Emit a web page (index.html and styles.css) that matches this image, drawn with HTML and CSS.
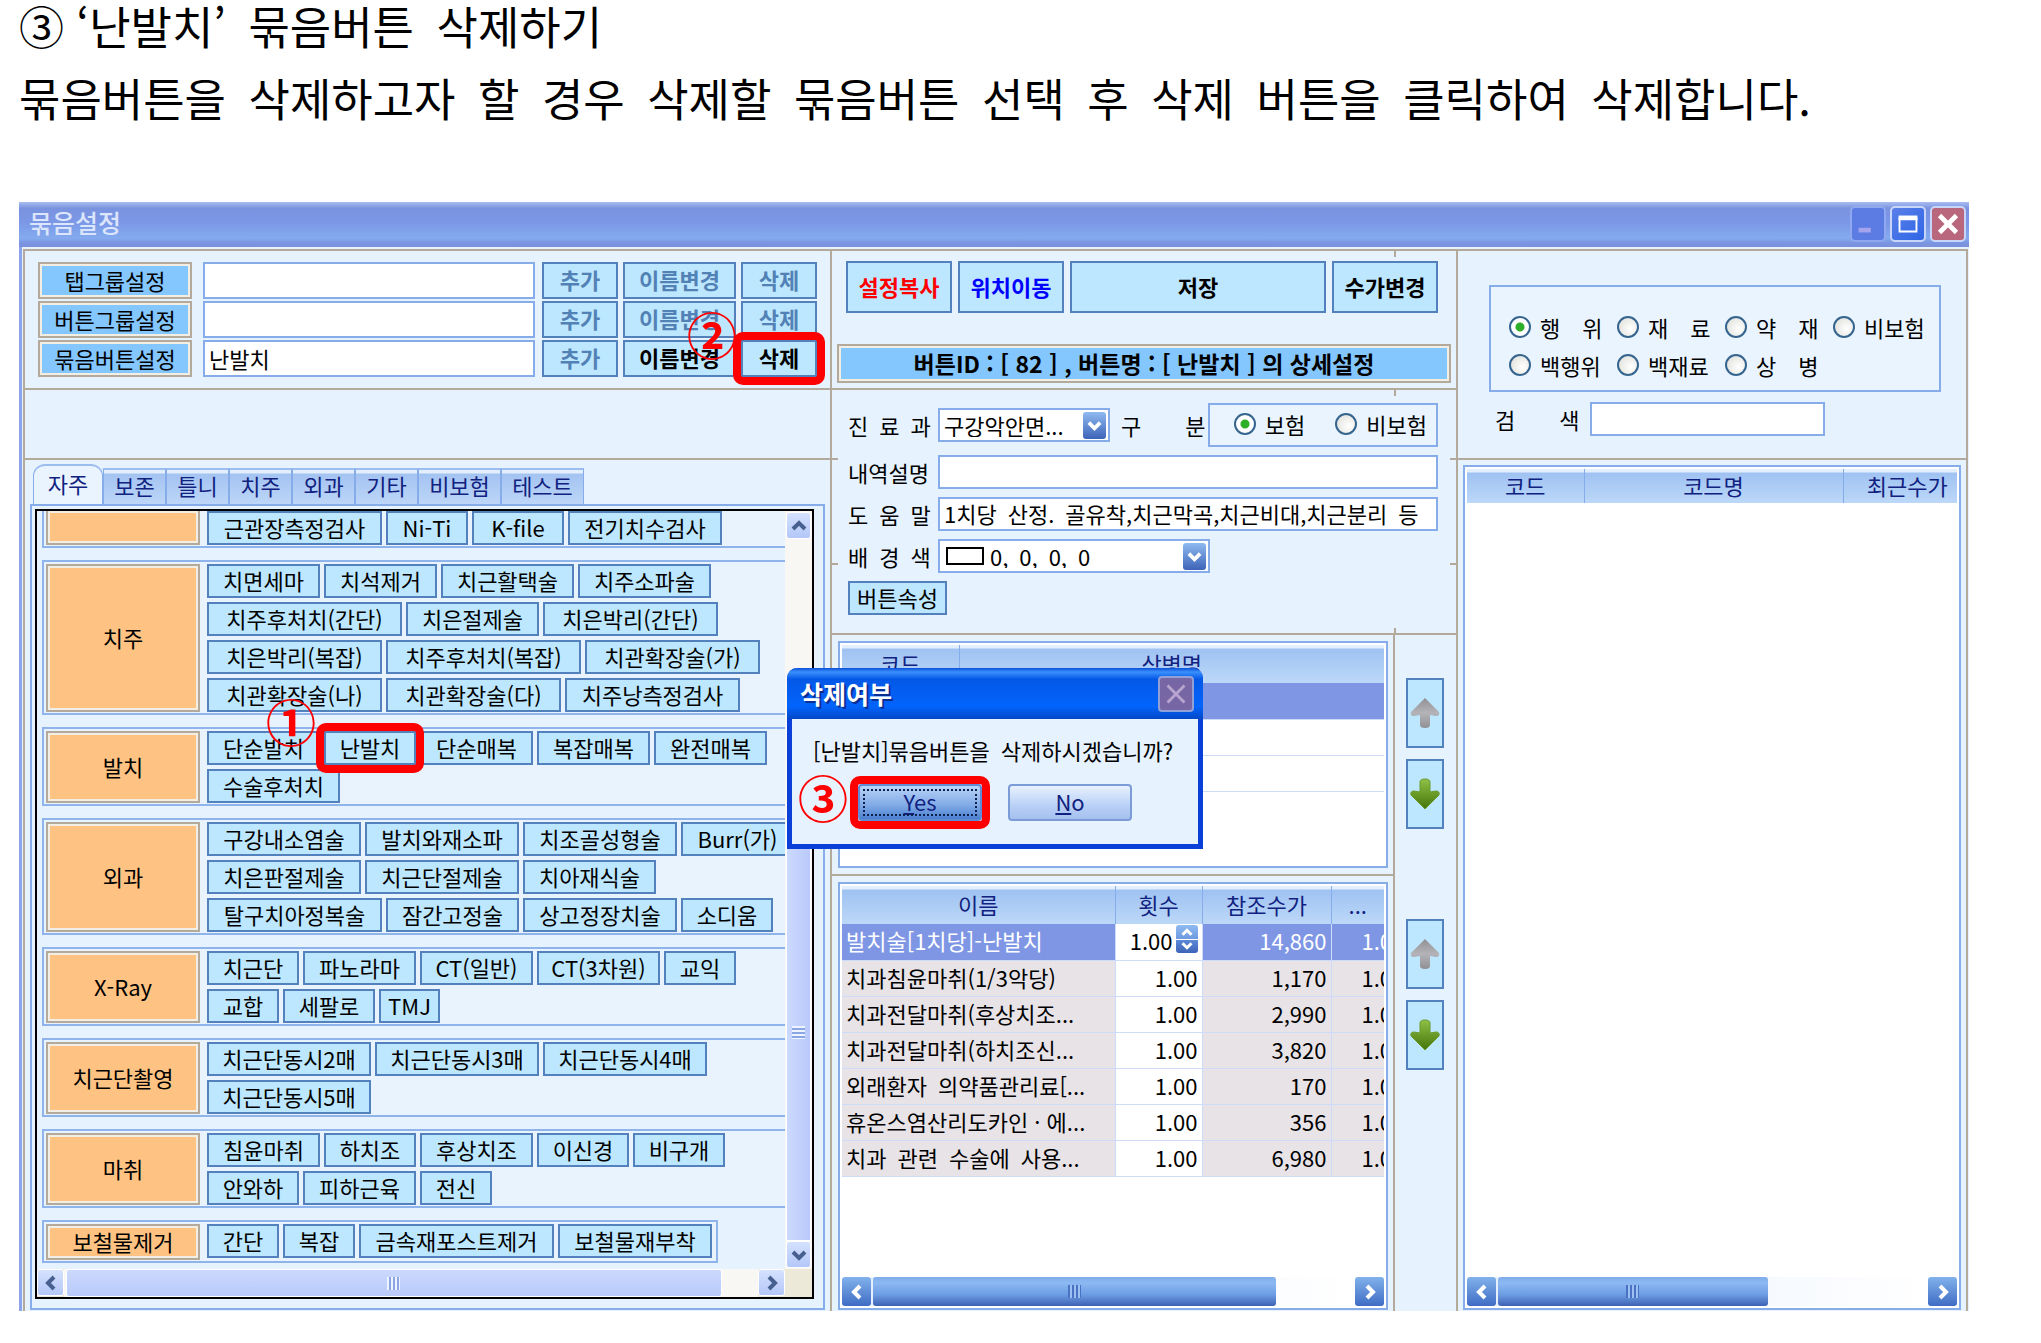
FILE: index.html
```html
<!DOCTYPE html>
<html lang="ko">
<head>
  <meta charset="UTF-8" />
  <meta name="viewport" content="width=device-width, initial-scale=1" />
  <title>묶음설정</title>
  <link rel="stylesheet" href="styles.css">
</head>
<body>
  <!-- shared icons -->
  <svg class="defs" width="0" height="0" aria-hidden="true">
    <defs>
      <linearGradient id="gGray" x1="0" y1="0" x2="0" y2="1"><stop offset="0" stop-color="#8f8f95"/><stop offset="0.5" stop-color="#b4b4b8"/><stop offset="1" stop-color="#909094"/></linearGradient>
      <linearGradient id="gGreen" x1="0" y1="0" x2="0" y2="1"><stop offset="0" stop-color="#8fc046"/><stop offset="1" stop-color="#44750a"/></linearGradient>
      <symbol id="arrowUp" viewBox="0 0 30 32"><path d="M15 1 L29 15 Q30 19 26 19 L20 18 V28 Q20 31 15 31 Q10 31 10 28 V18 L4 19 Q0 19 1 15 Z" fill="url(#gGray)"/></symbol>
      <symbol id="arrowDown" viewBox="0 0 30 32"><path d="M15 31 L29 17 Q30 13 26 13 L20 14 V4 Q20 1 15 1 Q10 1 10 4 V14 L4 13 Q0 13 1 17 Z" fill="url(#gGreen)" stroke="#6a9a2c"/></symbol>
      <symbol id="chevL" viewBox="0 0 16 16"><path d="M11 2 L5 8 L11 14" fill="none" stroke="currentColor" stroke-width="4"/></symbol>
      <symbol id="chevR" viewBox="0 0 16 16"><path d="M5 2 L11 8 L5 14" fill="none" stroke="currentColor" stroke-width="4"/></symbol>
      <symbol id="chevU" viewBox="0 0 16 16"><path d="M2 11 L8 5 L14 11" fill="none" stroke="currentColor" stroke-width="4"/></symbol>
      <symbol id="chevD" viewBox="0 0 16 16"><path d="M2 5 L8 11 L14 5" fill="none" stroke="currentColor" stroke-width="4"/></symbol>
    </defs>
  </svg>

  <h1>③ ‘난발치’&ensp;묶음버튼&ensp;삭제하기</h1>
  <p class="guide">묶음버튼을&ensp;삭제하고자&ensp;할&ensp;경우&ensp;삭제할&ensp;묶음버튼&ensp;선택&ensp;후&ensp;삭제&ensp;버튼을&ensp;클릭하여&ensp;삭제합니다.</p>

  <main class="window">
    <header class="titlebar">
      <h2>묶음설정</h2>
      <button class="winbtn min" aria-label="최소화"><svg viewBox="0 0 34 34"><rect x="7" y="21" width="13" height="5" fill="#a3a3ee"/></svg></button>
      <button class="winbtn max" aria-label="최대화"><svg viewBox="0 0 34 34"><path d="M8 11 H26 V25 H8 Z" fill="none" stroke="#fff" stroke-width="2"/><rect x="7" y="8" width="20" height="5" fill="#fff"/></svg></button>
      <button class="winbtn close" aria-label="닫기"><svg viewBox="0 0 34 34"><path d="M8 8 L26 26 M26 8 L8 26" stroke="#fff" stroke-width="5"/></svg></button>
    </header>

    <div class="columns">
      <!-- 묶음 목록 -->
      <section class="col col-left">
        <div class="top names">
          <div class="name-row">
            <label class="bevel" for="tabGroup">탭그룹설정</label>
            <input type="text" id="tabGroup">
            <button class="btn bold w76" disabled>추가</button>
            <button class="btn bold w113" disabled>이름변경</button>
            <button class="btn bold w76" disabled>삭제</button>
          </div>
          <div class="name-row">
            <label class="bevel" for="btnGroup">버튼그룹설정</label>
            <input type="text" id="btnGroup">
            <button class="btn bold w76" disabled>추가</button>
            <button class="btn bold w113" disabled>이름변경</button>
            <button class="btn bold w76" disabled>삭제</button>
          </div>
          <div class="name-row">
            <label class="bevel" for="setBtn">묶음버튼설정</label>
            <input type="text" id="setBtn" value="난발치">
            <button class="btn bold w76" disabled>추가</button>
            <button class="btn bold w113">이름변경</button>
            <button class="btn bold w76 marked">삭제<span class="step step-2">②</span></button>
          </div>
        </div>
        <div class="spacer"></div>

        <div class="tabs">
          <button class="tab active">자주</button><button class="tab">보존</button><button class="tab">틀니</button><button class="tab">치주</button><button class="tab">외과</button><button class="tab">기타</button><button class="tab tab-wide">비보험</button><button class="tab tab-wide">테스트</button>
        </div>
        <div class="tab-panel">
          <div class="scroller">
            <div class="groups">
              <div class="group cut">
                <div class="group-name"></div>
                <div class="rows">
                  <div class="row"><button class="btn w175">근관장측정검사</button><button class="btn w82">Ni-Ti</button><button class="btn w92">K-file</button><button class="btn w154">전기치수검사</button></div>
                </div>
              </div>
              <div class="group">
                <div class="group-name">치주</div>
                <div class="rows">
                  <div class="row"><button class="btn w113">치면세마</button><button class="btn w113">치석제거</button><button class="btn w133">치근활택술</button><button class="btn w133">치주소파술</button></div>
                  <div class="row"><button class="btn w195">치주후처치(간단)</button><button class="btn w133">치은절제술</button><button class="btn w175">치은박리(간단)</button></div>
                  <div class="row"><button class="btn w175">치은박리(복잡)</button><button class="btn w195">치주후처치(복잡)</button><button class="btn w175">치관확장술(가)</button></div>
                  <div class="row"><button class="btn w175">치관확장술(나)</button><button class="btn w175">치관확장술(다)</button><button class="btn w175">치주낭측정검사</button></div>
                </div>
              </div>
              <div class="group">
                <div class="group-name">발치</div>
                <div class="rows">
                  <div class="row"><button class="btn w113">단순발치</button><button class="btn w92 marked">난발치<span class="step step-1">①</span></button><button class="btn w113">단순매복</button><button class="btn w113">복잡매복</button><button class="btn w113">완전매복</button></div>
                  <div class="row"><button class="btn w133">수술후처치</button></div>
                </div>
              </div>
              <div class="group">
                <div class="group-name">외과</div>
                <div class="rows">
                  <div class="row"><button class="btn w154">구강내소염술</button><button class="btn w154">발치와재소파</button><button class="btn w154">치조골성형술</button><button class="btn w113">Burr(가)</button></div>
                  <div class="row"><button class="btn w154">치은판절제술</button><button class="btn w154">치근단절제술</button><button class="btn w133">치아재식술</button></div>
                  <div class="row"><button class="btn w175">탈구치아정복술</button><button class="btn w133">잠간고정술</button><button class="btn w154">상고정장치술</button><button class="btn w92">소디움</button></div>
                </div>
              </div>
              <div class="group">
                <div class="group-name">X-Ray</div>
                <div class="rows">
                  <div class="row"><button class="btn w92">치근단</button><button class="btn w113">파노라마</button><button class="btn w113">CT(일반)</button><button class="btn w123">CT(3차원)</button><button class="btn w72">교익</button></div>
                  <div class="row"><button class="btn w72">교합</button><button class="btn w92">세팔로</button><button class="btn w61">TMJ</button></div>
                </div>
              </div>
              <div class="group">
                <div class="group-name">치근단촬영</div>
                <div class="rows">
                  <div class="row"><button class="btn w164">치근단동시2매</button><button class="btn w164">치근단동시3매</button><button class="btn w164">치근단동시4매</button></div>
                  <div class="row"><button class="btn w164">치근단동시5매</button></div>
                </div>
              </div>
              <div class="group">
                <div class="group-name">마취</div>
                <div class="rows">
                  <div class="row"><button class="btn w113">침윤마취</button><button class="btn w92">하치조</button><button class="btn w113">후상치조</button><button class="btn w92">이신경</button><button class="btn w92">비구개</button></div>
                  <div class="row"><button class="btn w92">안와하</button><button class="btn w113">피하근육</button><button class="btn w72">전신</button></div>
                </div>
              </div>
              <div class="group fit">
                <div class="group-name">보철물제거</div>
                <div class="rows">
                  <div class="row"><button class="btn w72">간단</button><button class="btn w72">복잡</button><button class="btn w195">금속재포스트제거</button><button class="btn w154">보철물재부착</button></div>
                </div>
              </div>
            </div>
            <div class="vbar">
              <button class="sbtn" aria-label="위로"><svg><use href="#chevU"/></svg></button>
              <div class="vthumb"><i class="grip"></i></div>
              <button class="sbtn" aria-label="아래로"><svg><use href="#chevD"/></svg></button>
            </div>
            <div class="hbar">
              <button class="sbtn" aria-label="왼쪽"><svg><use href="#chevL"/></svg></button>
              <div class="track"><div class="thumb wide"><i class="grip"></i></div></div>
              <button class="sbtn" aria-label="오른쪽"><svg><use href="#chevR"/></svg></button>
            </div>
          </div>
        </div>
      </section>

      <!-- 상세설정 -->
      <section class="col col-mid">
        <div class="top detail-top">
          <div class="tools">
            <button class="btn bold red">설정복사</button>
            <button class="btn bold blue">위치이동</button>
            <button class="btn bold save">저장</button>
            <button class="btn bold">수가변경</button>
          </div>
          <div class="bevel detail-title">버튼ID : [ 82 ] , 버튼명 : [ 난발치 ] 의 상세설정</div>
        </div>

        <div class="form">
          <div class="form-row tall">
            <label for="dept">진&ensp;료&ensp;과</label>
            <div class="combo dept">
              <select id="dept"><option>구강악안면...</option></select>
              <span class="drop"><svg><use href="#chevD"/></svg></span>
            </div>
            <span class="kind">구&emsp;&emsp;분</span>
            <div class="radio-box kinds">
              <label><input type="radio" name="kind" checked>보험</label>
              <label><input type="radio" name="kind">비보험</label>
            </div>
          </div>
          <div class="form-row">
            <label for="desc">내역설명</label>
            <input type="text" id="desc">
          </div>
          <div class="form-row">
            <label for="help">도&ensp;움&ensp;말</label>
            <input type="text" id="help" value="1치당&ensp;산정.&ensp;골유착,치근막곡,치근비대,치근분리&ensp;등">
          </div>
          <div class="form-row">
            <label for="color">배&ensp;경&ensp;색</label>
            <div class="combo color">
              <i class="swatch"></i>
              <select id="color"><option>0,&ensp;0,&ensp;0,&ensp;0</option></select>
              <span class="drop"><svg><use href="#chevD"/></svg></span>
            </div>
          </div>
          <button class="btn prop">버튼속성</button>
        </div>

        <div class="lists">
          <div class="list-area first">
            <div class="grid-box">
              <table>
                <colgroup><col class="c117"><col></colgroup>
                <thead><tr><th scope="col">코드</th><th scope="col">상병명</th></tr></thead>
                <tbody>
                  <tr class="sel"><td></td><td></td></tr>
                  <tr><td></td><td></td></tr>
                  <tr><td></td><td></td></tr>
                </tbody>
              </table>
            </div>
          </div>
          <div class="arrows">
            <button class="btn" aria-label="위로 이동"><svg><use href="#arrowUp"/></svg></button>
            <button class="btn" aria-label="아래로 이동"><svg><use href="#arrowDown"/></svg></button>
          </div>
          <div class="list-area">
            <div class="grid-box">
              <table class="fees">
                <colgroup><col><col class="c87"><col class="c129"><col class="c53"></colgroup>
                <thead><tr><th scope="col">이름</th><th scope="col">횟수</th><th scope="col">참조수가</th><th scope="col">...</th></tr></thead>
                <tbody>
                  <tr class="sel"><td>발치술[1치당]-난발치</td><td class="cnt"><span class="spin">1.00<span class="updown"><svg><use href="#chevU"/></svg><svg><use href="#chevD"/></svg></span></span></td><td>14,860</td><td>1.00</td></tr>
                  <tr><td>치과침윤마취(1/3악당)</td><td class="cnt">1.00</td><td>1,170</td><td>1.00</td></tr>
                  <tr><td>치과전달마취(후상치조...</td><td class="cnt">1.00</td><td>2,990</td><td>1.00</td></tr>
                  <tr><td>치과전달마취(하치조신...</td><td class="cnt">1.00</td><td>3,820</td><td>1.00</td></tr>
                  <tr><td>외래환자&ensp;의약품관리료[...</td><td class="cnt">1.00</td><td>170</td><td>1.00</td></tr>
                  <tr><td>휴온스염산리도카인 · 에...</td><td class="cnt">1.00</td><td>356</td><td>1.00</td></tr>
                  <tr><td>치과&ensp;관련&ensp;수술에&ensp;사용...</td><td class="cnt">1.00</td><td>6,980</td><td>1.00</td></tr>
                </tbody>
              </table>
              <div class="hbar blue-bar">
                <button class="sbtn" aria-label="왼쪽"><svg><use href="#chevL"/></svg></button>
                <div class="track"><div class="thumb mid"><i class="grip"></i></div></div>
                <button class="sbtn" aria-label="오른쪽"><svg><use href="#chevR"/></svg></button>
              </div>
            </div>
          </div>
          <div class="arrows">
            <button class="btn" aria-label="위로 이동"><svg><use href="#arrowUp"/></svg></button>
            <button class="btn" aria-label="아래로 이동"><svg><use href="#arrowDown"/></svg></button>
          </div>
        </div>
      </section>

      <!-- 코드 검색 -->
      <section class="col col-right">
        <div class="search-top">
          <div class="radio-box types">
            <label><input type="radio" name="type" checked>행&emsp;위</label>
            <label><input type="radio" name="type">재&emsp;료</label>
            <label><input type="radio" name="type">약&emsp;재</label>
            <label><input type="radio" name="type">비보험</label>
            <label><input type="radio" name="type">백행위</label>
            <label><input type="radio" name="type">백재료</label>
            <label><input type="radio" name="type">상&emsp;병</label>
          </div>
          <div class="search">
            <label for="q">검&emsp;&emsp;색</label>
            <input type="text" id="q">
          </div>
        </div>
        <div class="grid-box codes">
          <table>
            <colgroup><col class="c117"><col><col class="c114"></colgroup>
            <thead><tr><th scope="col">코드</th><th scope="col">코드명</th><th scope="col" class="last">최근수가</th></tr></thead>
          </table>
          <div class="hbar blue-bar">
            <button class="sbtn" aria-label="왼쪽"><svg><use href="#chevL"/></svg></button>
            <div class="track"><div class="thumb small"><i class="grip"></i></div></div>
            <button class="sbtn" aria-label="오른쪽"><svg><use href="#chevR"/></svg></button>
          </div>
        </div>
      </section>
    </div>

    <div class="dialog" role="dialog" aria-labelledby="dlgTitle">
      <div class="dialog-title">
        <h3 id="dlgTitle">삭제여부</h3>
        <button aria-label="닫기"><svg viewBox="0 0 34 34"><path d="M8 8 L26 26 M26 8 L8 26" stroke="#b7a5cf" stroke-width="3"/></svg></button>
      </div>
      <p>[난발치]묶음버튼을&ensp;삭제하시겠습니까?</p>
      <div class="answers">
        <button class="yes marked"><u>Y</u>es<span class="step step-3">③</span></button>
        <button class="no"><u>N</u>o</button>
      </div>
    </div>
  </main>
</body>
</html>
```

FILE: styles.css
```css
* {
  box-sizing: border-box;
}
body {
  margin: 0;
  padding: 0 72px 34px 19px;
  background: #fff;
  color: #000;
  font-family: "Noto Sans CJK KR", sans-serif;
  font-size: 22px;
  line-height: 30px;
}
h1, h2, h3, p {
  margin: 0;
  font-weight: 400;
}
h1, .guide {
  font-size: 45px;
  white-space: nowrap;
}
h1 { line-height: 52px; }
.guide { line-height: 92px; }
.defs { position: absolute; }
button, input, select {
  font: inherit;
  color: inherit;
  margin: 0;
  border-radius: 0;
}
svg { display: block; }

/* window */
.window {
  position: relative;
  margin-top: 58px;
  border-left: 3px solid #8ba4ea;
  background: #e6f2fe;
}
.titlebar {
  display: flex;
  align-items: center;
  gap: 4px;
  height: 45px;
  margin-left: -3px;
  padding: 0 3px 2px 10px;
  background: linear-gradient(#a8bdf0 0, #7a93df 14%, #7b97e6 45%, #84aaee 80%, #7b94e0 92%, #7b90dc);
}
.titlebar h2 {
  flex: 1;
  padding-bottom: 3px;
  font-size: 25px;
  font-weight: 500;
  color: #dbe5fb;
}
.winbtn {
  width: 36px;
  height: 36px;
  padding: 0;
  border: 2px solid #c9d5f8;
  border-radius: 5px;
}
.min { background: #5d7ce3; border-color: #8fa8ef; }
.max { background: linear-gradient(135deg, #5a7fe8, #2f66e6); }
.close { background: #b9677c; }

.columns {
  display: grid;
  grid-template-columns: 807fr 626fr 508fr;
  margin: 2px 1px 0;
  border: 2px solid #b3aa9c;
  border-bottom: 0;
}
.window::after {
  content: "";
  display: block;
}
.col {
  display: flex;
  flex-direction: column;
  min-width: 0;
  border-right: 2px solid #b3aa9c;
}
.col-right { border-right: 0; }
.top {
  height: 139px;
  border-bottom: 2px solid #b3aa9c;
}
.names {
  display: flex;
  flex-direction: column;
  gap: 2px;
  padding: 11px 13px 0;
}
.name-row {
  display: flex;
  gap: 5px;
  height: 37px;
}
.name-row input {
  flex: 1;
  min-width: 0;
  margin: 0 2px 0 6px;
}
.name-row .bevel { width: 154px; }
.spacer {
  height: 70px;
  border-bottom: 2px solid #b3aa9c;
}
.bevel {
  display: flex;
  align-items: center;
  justify-content: center;
  padding-bottom: 2px;
  border: 2px solid #b3aa9c;
  box-shadow: inset 0 0 0 2px #f3eee4;
  background: #84c6fe;
}
input[type="text"] {
  padding: 0 4px 2px;
  border: 2px solid #86adea;
  background: #fff;
}
.btn {
  position: relative;
  flex: none;
  padding: 0 0 3px;
  border: 2px solid #5281bd;
  background: #bce7fe;
  line-height: 26px;
  white-space: nowrap;
}
.bold { font-weight: 700; }
.btn:disabled { color: #5281b5; }
.red { color: #f00; }
.blue { color: #00f; }
.w61 { width: 61px; }
.w72 { width: 72px; }
.w76 { width: 76px; }
.w82 { width: 82px; }
.w92 { width: 92px; }
.w113 { width: 113px; }
.w123 { width: 123px; }
.w133 { width: 133px; }
.w154 { width: 154px; }
.w164 { width: 164px; }
.w175 { width: 175px; }
.w195 { width: 195px; }

/* red step marks */
.marked { z-index: 1; }
.marked::after {
  content: "";
  position: absolute;
  inset: -10px;
  border: 8px solid #f00;
  border-radius: 10px;
}
.step {
  position: absolute;
  font-size: 50px;
  font-weight: 700;
  line-height: 50px;
  color: #f00;
}
.step-1 { left: -60px; top: -38px; }
.step-2 { left: -56px; top: -34px; }
.step-3 { left: -62px; top: -15px; }

/* tabs */
.tabs {
  display: flex;
  height: 44px;
  padding: 8px 8px 0;
}
.tab {
  width: 63px;
  padding: 0 0 4px;
  border: 1px solid #86adea;
  border-top: 2px solid #9cbdf0;
  border-bottom: 0;
  background: linear-gradient(#e3effd 3px, #a3c3f1 4px, #bdd6f8);
  color: #10217f;
}
.tab-wide { width: 83px; }
.tab.active {
  width: 70px;
  margin-top: -4px;
  border-radius: 12px 12px 0 0;
  background: #eaf4ff;
}
.tab-panel {
  margin: 0 5px 1px;
  padding: 3px 9px 9px 3px;
  border: 2px solid #86adea;
}
.scroller {
  display: grid;
  grid-template-columns: minmax(0, 1fr) 27px;
  border: 2px solid #000;
  background: #ece9d8;
}
.groups {
  display: flex;
  flex-direction: column;
  gap: 12px;
  padding: 0 0 6px 5px;
  overflow: hidden;
  background: #e6f2fe;
}
.group {
  display: flex;
  gap: 7px;
  padding: 2px 0 1px 2px;
  border: 2px solid #8fb4ec;
  border-right: 0;
  background: #e9f3fe;
}
.group.cut, .group.cut .group-name {
  padding-top: 0;
  border-top: 0;
}
.group.fit {
  align-self: flex-start;
  padding-right: 4px;
  border-right: 2px solid #8fb4ec;
}
.group-name {
  display: flex;
  flex: none;
  align-items: center;
  justify-content: center;
  width: 154px;
  padding-bottom: 2px;
  border: 2px solid #b3aa9c;
  box-shadow: inset 0 0 0 2px #f3eee4;
  background: #fec383;
}
.rows {
  display: flex;
  flex-direction: column;
  gap: 4px;
}
.row {
  display: flex;
  gap: 4px;
  height: 34px;
}

/* scroll bars */
.vbar {
  display: flex;
  flex-direction: column;
  padding: 1px;
  background: #f8f7f4;
}
.sbtn {
  display: flex;
  flex: none;
  align-items: center;
  justify-content: center;
  width: 27px;
  height: 27px;
  padding: 0;
  border: 1px solid #fff;
  border-radius: 3px;
  background: linear-gradient(#d5e1fe, #b3c7f8);
  color: #47608f;
}
.sbtn svg { width: 16px; height: 16px; }
.vbar .sbtn { width: 25px; }
.vthumb {
  display: flex;
  flex: 1;
  align-items: center;
  justify-content: center;
  margin-top: 284px;
  border: 1px solid #fff;
  background: linear-gradient(90deg, #ccd9fe, #b9cafa);
}
.hbar {
  display: flex;
  height: 28px;
}
.track {
  display: flex;
  flex: 1;
  padding: 0 2px;
  background: #f8f7f4;
}
.thumb {
  display: flex;
  align-items: center;
  justify-content: center;
  border: 1px solid #fff;
  border-radius: 3px;
  background: linear-gradient(#ccd9fe, #b9cafa);
}
.wide { width: 95%; }
.mid { width: 84%; }
.small { width: 63%; }
.grip {
  width: 13px;
  height: 13px;
  background: repeating-linear-gradient(90deg, #edf3ff 0 2px, #8ca6e4 2px 4px);
}
.vthumb .grip {
  background: repeating-linear-gradient(#edf3ff 0 2px, #8ca6e4 2px 4px);
}
.blue-bar {
  height: 29px;
  margin-top: auto;
}
.blue-bar .sbtn {
  width: 29px;
  height: 29px;
  border: 0;
  background: linear-gradient(#82b2ec, #3f6cc4);
  color: #fff;
}
.blue-bar .track { background: linear-gradient(90deg, #e6effc, #fff); }
.blue-bar .thumb {
  border: 0;
  background: linear-gradient(#7fadeb, #8db9f2 20%, #6d9ee4 60%, #3e62b4);
}
.blue-bar .grip {
  background: repeating-linear-gradient(90deg, #4a72c4 0 2px, #9cc0f2 2px 4px);
}

/* detail */
.col-mid {
  background:
    linear-gradient(#b3aa9c, #b3aa9c) 562px 0 / 2px 6px no-repeat,
    linear-gradient(#b3aa9c, #b3aa9c) 562px 139px / 2px 6px no-repeat,
    linear-gradient(#b3aa9c, #b3aa9c) 562px 377px / 2px 6px no-repeat,
    linear-gradient(#b3aa9c, #b3aa9c) 0 207px / 6px 2px no-repeat,
    linear-gradient(#b3aa9c, #b3aa9c) 100% 207px / 6px 2px no-repeat,
    linear-gradient(#b3aa9c, #b3aa9c) 0 312px / 6px 2px no-repeat,
    linear-gradient(#b3aa9c, #b3aa9c) 100% 312px / 6px 2px no-repeat;
}
.detail-top { padding: 10px 5px 0; }
.tools {
  display: flex;
  gap: 6px;
  height: 52px;
  margin: 0 13px 31px 9px;
}
.tools .btn { width: 106px; }
.tools .save { flex: 1; }
.detail-title {
  height: 39px;
  font-size: 23px;
  font-weight: 700;
}
.form {
  display: flex;
  flex-direction: column;
  gap: 8px;
  height: 245px;
  padding: 13px 18px 0 16px;
  border-bottom: 2px solid #b3aa9c;
}
.form-row {
  display: flex;
  align-items: center;
  height: 34px;
}
.form-row.tall { height: 44px; }
.form-row > label { width: 90px; }
.form-row input[type="text"] {
  flex: 1;
  min-width: 0;
  height: 34px;
}
.combo {
  display: flex;
  align-items: center;
  height: 34px;
  padding: 0 2px;
  border: 2px solid #86adea;
  background: #fff;
}
.combo select {
  flex: 1;
  min-width: 0;
  height: 30px;
  padding: 0 2px 3px;
  border: 0;
  appearance: none;
  background: none;
}
.dept { width: 172px; }
.color { width: 272px; }
.drop {
  display: flex;
  align-items: center;
  justify-content: center;
  width: 23px;
  height: 27px;
  border-radius: 3px;
  background: linear-gradient(#8fbaf0, #3d63b8);
  color: #fff;
}
.drop svg { width: 15px; height: 15px; }
.swatch {
  width: 38px;
  height: 18px;
  margin: 0 4px;
  border: 2px solid #000;
}
.kind {
  width: 98px;
  padding-left: 11px;
}
.radio-box {
  border: 2px solid #86adea;
  background: #eaf4fe;
}
.radio-box label {
  display: flex;
  align-items: center;
  gap: 9px;
  white-space: nowrap;
}
.kinds {
  display: flex;
  flex: 1;
  justify-content: flex-end;
  gap: 30px;
  height: 44px;
  padding: 0 9px 2px 0;
}
input[type="radio"] {
  appearance: none;
  width: 22px;
  height: 22px;
  border: 2px solid #35658f;
  border-radius: 50%;
  background: radial-gradient(circle at 65% 60%, #fff, #dcdcd6);
}
input[type="radio"]:checked {
  background: radial-gradient(circle, #2fae2a 0 4px, #fff 5px);
}
.prop {
  width: 99px;
  height: 34px;
}
.lists {
  display: grid;
  flex: 1;
  grid-template-columns: minmax(0, 1fr) 61px;
  grid-template-rows: 241px 1fr;
}
.list-area {
  display: flex;
  padding: 6px 5px 1px 6px;
  border-right: 2px solid #b3aa9c;
}
.list-area.first {
  padding-bottom: 6px;
  border-bottom: 2px solid #b3aa9c;
}
.grid-box {
  display: flex;
  flex: 1;
  flex-direction: column;
  min-width: 0;
  padding: 2px;
  border: 2px solid #86adea;
  background: #fff;
}
.arrows {
  display: flex;
  flex-direction: column;
  align-items: center;
  gap: 11px;
  padding: 43px 2px 0 0;
}
.arrows .btn {
  display: flex;
  align-items: center;
  justify-content: center;
  width: 38px;
  height: 70px;
  padding: 0;
}
.arrows svg { width: 32px; height: 32px; }

table {
  width: 100%;
  border-collapse: collapse;
  table-layout: fixed;
}
th {
  height: 38px;
  padding: 0 0 3px;
  border: 1px solid #86adea;
  border-width: 0 1px;
  background: linear-gradient(#e3effd 3px, #9fc2f2 4px, #bcd8f8);
  color: #10217f;
  font-weight: 400;
}
td {
  height: 36px;
  padding: 0 4px 3px;
  border: 1px solid #ccdcf8;
  border-top: 0;
  overflow: hidden;
  white-space: nowrap;
}
tr > :first-child { border-left: 0; }
tr > :last-child { border-right: 0; }
.fees td { background: #e7e3e7; }
.fees td + td { text-align: right; }
.fees td:last-child {
  padding: 0 0 3px 30px;
  text-align: left;
}
.fees .cnt { background: #fff; }
.sel td, .fees .sel td {
  background: #7e96e4;
  color: #fff;
}
.fees .sel .cnt {
  background: #fff;
  color: #000;
}
.spin {
  display: flex;
  justify-content: flex-end;
  gap: 3px;
}
.updown {
  width: 22px;
  height: 28px;
  padding: 1px 5px;
  border-radius: 3px;
  background: linear-gradient(#8fbaf0, #6d9ae0 49%, #fff 49% 52%, #5d8bd8 52%, #3d63b8);
  color: #fff;
}
.updown svg { width: 12px; height: 13px; }
.c53 { width: 53px; }
.c87 { width: 87px; }
.c114 { width: 114px; }
.c117 { width: 117px; }
.c129 { width: 129px; }

/* search */
.search-top {
  height: 209px;
  padding: 34px 25px 0 31px;
  border-bottom: 2px solid #b3aa9c;
}
.types {
  display: grid;
  grid-template-columns: repeat(4, 108px);
  grid-auto-rows: 38px;
  height: 107px;
  padding: 21px 0 0 18px;
}
.search {
  display: flex;
  align-items: center;
  margin-top: 10px;
  padding-left: 6px;
}
.search label { width: 95px; }
.search input {
  width: 235px;
  height: 34px;
}
.codes { margin: 5px 5px 1px; }
.codes th { height: 34px; }
.codes .last { padding-left: 14px; }

/* confirm dialog */
.dialog {
  position: absolute;
  z-index: 2;
  left: 765px;
  top: 466px;
  width: 416px;
  height: 181px;
  border: 5px solid #0a3fd8;
  border-top: 0;
  border-radius: 10px 10px 0 0;
  background: #e6f2fe;
}
.dialog-title {
  display: flex;
  align-items: center;
  height: 51px;
  margin: 0 -5px;
  padding: 0 9px 0 13px;
  border-radius: 10px 10px 0 0;
  background: linear-gradient(#0a4fd8, #3a90fc 8%, #0458e6 22%, #0264fc 75%, #0348c8);
}
.dialog-title h3 {
  flex: 1;
  padding-bottom: 2px;
  color: #fff;
  font-size: 25px;
  font-weight: 700;
  text-shadow: 2px 2px 0 #0b2e94;
}
.dialog-title button {
  width: 36px;
  height: 36px;
  padding: 0;
  border: 2px solid #92a0d8;
  border-radius: 4px;
  background: #7766a4;
}
.dialog p {
  padding: 16px 0 19px 21px;
  white-space: nowrap;
}
.answers {
  display: flex;
  gap: 26px;
  padding-left: 66px;
}
.answers button {
  position: relative;
  width: 124px;
  height: 37px;
  padding: 0 0 3px;
  border: 2px solid #7c9cd8;
  border-radius: 4px;
  background: linear-gradient(#e8f1fe, #b9d0f6 60%, #a5c0ef);
  color: #10217f;
  line-height: 30px;
}
.answers .yes {
  border-color: #5f8bd4;
  background: linear-gradient(#b9d4f8, #7fa9e6 60%, #4a7fd0);
  outline: 2px dotted #10204c;
  outline-offset: -7px;
}
```
